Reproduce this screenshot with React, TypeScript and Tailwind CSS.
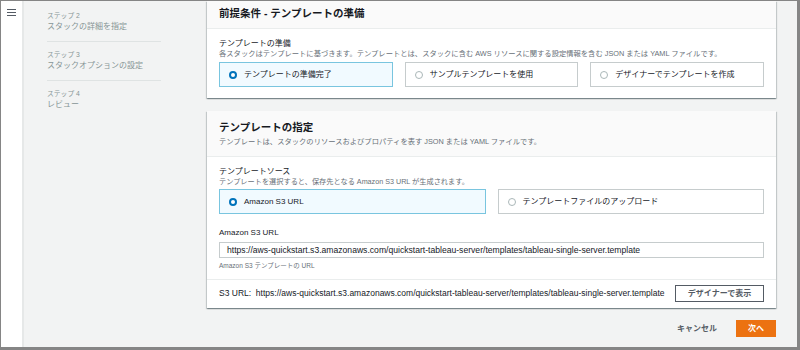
import React from "react"

const font = { fontFamily: '"Liberation Sans", "Noto Sans CJK JP", sans-serif' }

const URL =
  "https://aws-quickstart.s3.amazonaws.com/quickstart-tableau-server/templates/tableau-single-server.template"

function Radio({ checked }: { checked?: boolean }) {
  return checked ? (
    <span className="w-[8px] h-[8px] rounded-full border-[2.5px] border-[#0073bb] bg-white shrink-0" />
  ) : (
    <span className="w-[8px] h-[8px] rounded-full border border-[#aab7b8] bg-white shrink-0" />
  )
}

function Tile({ label, checked }: { label: string; checked?: boolean }) {
  return (
    <div
      className={`flex-1 h-[25px] flex items-center gap-[7px] pl-[9px] border text-[8px] text-[#16191f] ${
        checked ? "border-[#79c5df] bg-[#f1faff]" : "border-[#c6cccd] bg-white"
      }`}
    >
      <Radio checked={checked} />
      <span className="leading-[10px]">{label}</span>
    </div>
  )
}

const panel =
  "bg-white shadow-[0_1px_1px_0_rgba(0,28,36,0.3),1px_1px_1px_0_rgba(0,28,36,0.15),-1px_1px_1px_0_rgba(0,28,36,0.15)]"

function Steps() {
  const steps = [
    { n: "ステップ 2", t: "スタックの詳細を指定" },
    { n: "ステップ 3", t: "スタックオプションの設定" },
    { n: "ステップ 4", t: "レビュー" },
  ]
  return (
    <nav className="w-[183px] pl-[23px] pt-[10px] shrink-0">
      <div className="w-[114px]">
        {steps.map((s, i) => (
          <div
            key={s.n}
            className={`text-[#879596] ${i < steps.length - 1 ? "border-b border-[#dfe3e3] pb-[8px] mb-[8px]" : ""}`}
          >
            <div className="text-[6.8px] leading-[9px]">{s.n}</div>
            <div className="text-[8px] leading-[12px] mt-[1px]">{s.t}</div>
          </div>
        ))}
      </div>
    </nav>
  )
}

export default function App() {
  return (
    <div
      style={font}
      className="w-[800px] h-[350px] flex overflow-hidden border-t border-l border-r-[3px] border-b-[3px] border-[#858585] bg-[#f2f3f3]"
    >
      {/* side bar */}
      <aside className="w-[23px] shrink-0 bg-white border-r-2 border-[#e6e8e8] flex justify-center pt-[8px]">
        <div className="w-[9px] flex flex-col gap-[1.6px]">
          <span className="h-[1.4px] bg-[#545b64]" />
          <span className="h-[1.4px] bg-[#545b64]" />
          <span className="h-[1.4px] bg-[#545b64]" />
        </div>
      </aside>

      <Steps />

      <main className="w-[569px] shrink-0 flex flex-col">
        {/* prerequisite */}
        <section className={panel}>
          <div className="h-[28px] bg-[#fafafa] border-b border-[#eaeded] px-[12px] pt-[5px]">
            <h2 className="text-[10.5px] leading-[14px] font-bold text-[#16191f]">前提条件 - テンプレートの準備</h2>
          </div>
          <div className="px-[12px] pt-[9px] pb-[11px]">
            <div className="text-[8px] leading-[11px] text-[#16191f]">テンプレートの準備</div>
            <div className="text-[7.3px] leading-[9px] text-[#687078]">
              各スタックはテンプレートに基づきます。テンプレートとは、スタックに含む AWS リソースに関する設定情報を含む JSON または YAML ファイルです。
            </div>
            <div className="flex gap-[12px] mt-[4px]">
              <Tile label="テンプレートの準備完了" checked />
              <Tile label="サンプルテンプレートを使用" />
              <Tile label="デザイナーでテンプレートを作成" />
            </div>
          </div>
        </section>

        {/* template source */}
        <section className={`${panel} mt-[13px]`}>
          <div className="bg-[#fafafa] border-b border-[#eaeded] px-[12px] pt-[9px] pb-[9px]">
            <h2 className="text-[10.5px] leading-[14px] font-bold text-[#16191f]">テンプレートの指定</h2>
            <div className="text-[7.3px] leading-[10px] mt-[3px] text-[#687078]">
              テンプレートは、スタックのリソースおよびプロパティを表す JSON または YAML ファイルです。
            </div>
          </div>
          <div className="px-[12px] pt-[9px] pb-[9px]">
            <div className="text-[8px] leading-[11px] text-[#16191f]">テンプレートソース</div>
            <div className="text-[7.2px] leading-[9px] text-[#687078]">
              テンプレートを選択すると、保存先となる Amazon S3 URL が生成されます。
            </div>
            <div className="flex gap-[12px] mt-[3px]">
              <Tile label="Amazon S3 URL" checked />
              <Tile label="テンプレートファイルのアップロード" />
            </div>
            <div className="text-[8px] leading-[11px] mt-[13px] text-[#16191f]">Amazon S3 URL</div>
            <div className="mt-[4px] h-[16px] border border-[#c6cccd] flex items-center px-[7px] text-[8.6px] text-[#16191f] whitespace-nowrap overflow-hidden">
              {URL}
            </div>
            <div className="text-[6.5px] leading-[9px] mt-[3px] text-[#687078]">Amazon S3 テンプレートの URL</div>
          </div>
          <div className="border-t border-[#eaeded] px-[12px] pt-[5px] pb-[6px] flex items-center justify-between">
            <div className="text-[8.5px] text-[#16191f] whitespace-nowrap">
              S3 URL:&nbsp; {URL}
            </div>
            <button className="w-[89px] h-[17px] border border-[#545b64] bg-white text-[8px] font-bold text-[#545b64]">
              デザイナーで表示
            </button>
          </div>
        </section>

        {/* footer */}
        <div className="mt-[12px] flex items-center justify-end gap-[19px]">
          <span className="text-[8px] font-bold text-[#545b64]">キャンセル</span>
          <button className="w-[40px] h-[17px] bg-[#ec7211] text-white text-[8px] font-bold">次へ</button>
        </div>
      </main>
    </div>
  )
}
